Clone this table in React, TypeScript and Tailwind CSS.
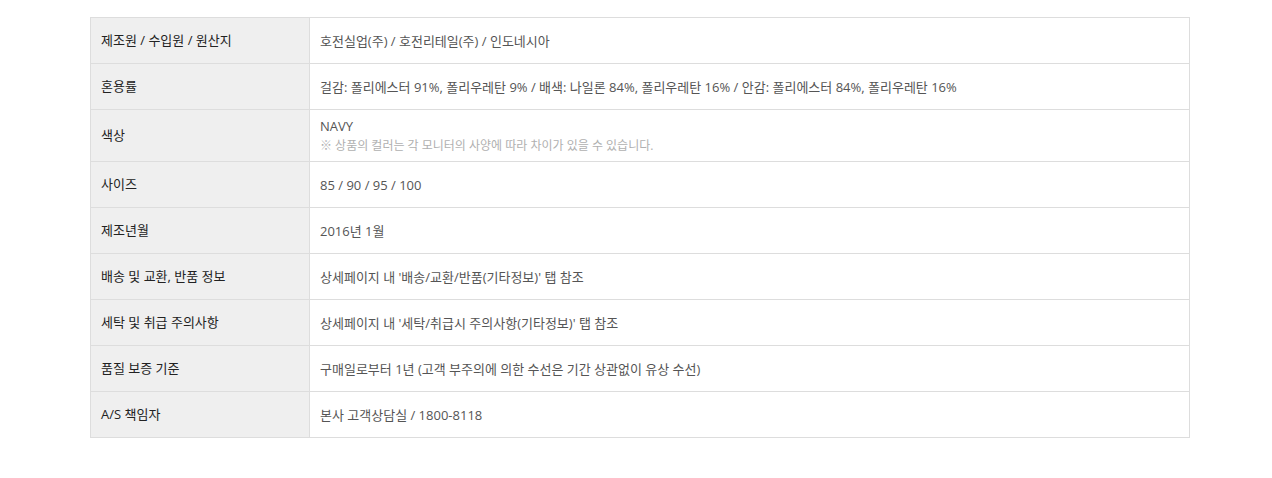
import React from 'react';

type Row = { label: string; value: string; note?: string };

const rows: Row[] = [
  { label: '제조원 / 수입원 / 원산지', value: '호전실업(주) / 호전리테일(주) / 인도네시아' },
  {
    label: '혼용률',
    value: '걸감: 폴리에스터 91%, 폴리우레탄 9% / 배색: 나일론 84%, 폴리우레탄 16% / 안감: 폴리에스터 84%, 폴리우레탄 16%',
  },
  { label: '색상', value: 'NAVY', note: '※ 상품의 컬러는 각 모니터의 사양에 따라 차이가 있을 수 있습니다.' },
  { label: '사이즈', value: '85 / 90 / 95 / 100' },
  { label: '제조년월', value: '2016년 1월' },
  { label: '배송 및 교환, 반품 정보', value: "상세페이지 내 '배송/교환/반품(기타정보)' 탭 참조" },
  { label: '세탁 및 취급 주의사항', value: "상세페이지 내 '세탁/취급시 주의사항(기타정보)' 탭 참조" },
  { label: '품질 보증 기준', value: '구매일로부터 1년 (고객 부주의에 의한 수선은 기간 상관없이 유상 수선)' },
  { label: 'A/S 책임자', value: '본사 고객상담실 / 1800-8118' },
];

export default function App() {
  return (
    <div className="w-[1272px] h-[478px] bg-white pt-[17px] pl-[90px] font-['Open_Sans','Noto_Sans_CJK_KR',sans-serif] text-[13px]">
      <table className="w-[1100px] border-collapse border border-[#dddddd]">
        <tbody>
          {rows.map((r) => (
            <tr key={r.label} className={r.note ? 'h-[52px]' : 'h-[46px]'}>
              <th className="w-[219px] border border-[#dddddd] bg-[#efefef] px-[10px] text-left align-middle font-normal text-[#222222]">
                {r.label}
              </th>
              <td className="border border-[#dddddd] px-[10px] align-middle text-[#555555]">
                <div className="leading-[20px]">{r.value}</div>
                {r.note && <div className="text-[12px] leading-[20px] text-[#b0b0b0]">{r.note}</div>}
              </td>
            </tr>
          ))}
        </tbody>
      </table>
    </div>
  );
}
